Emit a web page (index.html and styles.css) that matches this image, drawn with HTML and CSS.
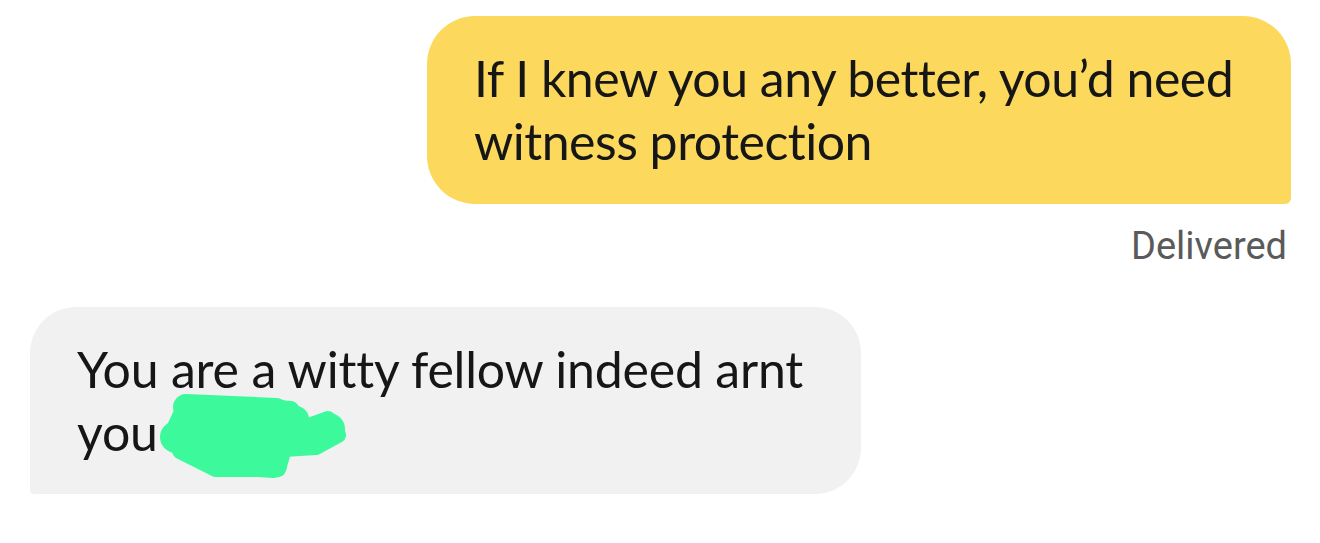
FILE: index.html
```html
<!DOCTYPE html>
<html>
<head>
<meta charset="utf-8">
<link rel="stylesheet" href="styles.css">
</head>
<body>
<div class="chat">
  <div class="row row-out">
    <div class="bubble bubble-out">If I knew you any better, you’d need<br>witness protection</div>
  </div>
  <div class="status">Delivered</div>
  <div class="row row-in">
    <div class="bubble bubble-in">You are a witty fellow indeed arnt<br>you <span class="hidden-word"><svg class="scribble" viewBox="0 0 200 95" width="200" height="95"><g fill="#3cfa9b" stroke="#3cfa9b" stroke-linecap="round" stroke-linejoin="round"><polygon points="30,14 135,20 150,38 172,30 182,46 160,58 128,60 122,80 60,80 24,62 18,40" stroke-width="16"/><path d="M30 18 L120 22 L140 30" fill="none" stroke-width="26"/><path d="M20 48 L150 48" fill="none" stroke-width="32"/><path d="M60 72 L118 76" fill="none" stroke-width="26"/><circle cx="173" cy="40" r="16" stroke="none"/></g></svg></span></div>
  </div>
</div>
</body>
</html>
```
FILE: styles.css
```css
html, body {
  margin: 0;
  padding: 0;
  background: #ffffff;
}
body {
  width: 1320px;
  height: 543px;
  overflow: hidden;
  font-family: "Lato", "Open Sans", sans-serif;
  color: #161616;
}
.chat {
  display: flex;
  flex-direction: column;
  padding-top: 16px;
}
.row {
  display: flex;
}
.row-out {
  justify-content: flex-end;
  padding-right: 29px;
}
.row-in {
  justify-content: flex-start;
  padding-left: 30px;
  margin-top: 41px;
}
.bubble {
  font-size: 50px;
  line-height: 63px;
  letter-spacing: -0.2px;
  padding: 31px 0 31px 47px;
  box-sizing: border-box;
}
.bubble-out {
  width: 864px;
  height: 188px;
  background: #fcd95d;
  border-radius: 48px 48px 6px 48px;
  letter-spacing: -0.5px;
}
.bubble-in {
  width: 831px;
  height: 187px;
  background: #f1f1f1;
  border-radius: 46px 46px 46px 4px;
}
.status {
  align-self: flex-end;
  padding-right: 33px;
  margin-top: 22px;
  font-family: "Roboto", "Liberation Sans", sans-serif;
  font-size: 38px;
  line-height: 40px;
  color: #5a5a5a;
}
.hidden-word {
  position: relative;
  display: inline-block;
  width: 20px;
  height: 50px;
}
.scribble {
  position: absolute;
  left: -14px;
  top: -12px;
}
```
